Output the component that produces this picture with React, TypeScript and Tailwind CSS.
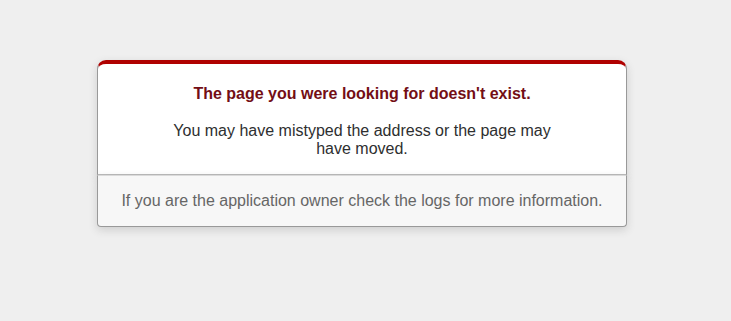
import React from 'react';

export default function App() {
  return (
    <div className="min-h-[321px] bg-[#EFEFEF] text-center text-[16px] leading-[normal] text-[#2E2F30] font-['Liberation_Sans',Arial,sans-serif]">
      <div className="flex justify-center pr-[7px] pt-[60px]">
        <div className="w-[530px]">
          <div className="rounded-t-[9px] border border-[#CCC] border-x-[#999] border-b-[#BBB] border-t-4 border-t-[#B00100] bg-white px-[63px] pt-[7px] shadow-[0_3px_8px_rgba(50,50,50,0.17)]">
            <h1 className="my-[10.72px] text-[16px] font-bold leading-[24px] text-[#730E15]">
              The page you were looking for doesn't exist.
            </h1>
            <p className="mt-[16px] pb-[16px]">
              You may have mistyped the address or the page may have moved.
            </p>
          </div>
          <p className="rounded-b-[4px] border border-[#CCC] border-x-[#999] border-b-[#999] border-t-[#DADADA] bg-[#F7F7F7] p-[16px] text-[#666] shadow-[0_3px_8px_rgba(50,50,50,0.17)]">
            If you are the application owner check the logs for more information.
          </p>
        </div>
      </div>
    </div>
  );
}
